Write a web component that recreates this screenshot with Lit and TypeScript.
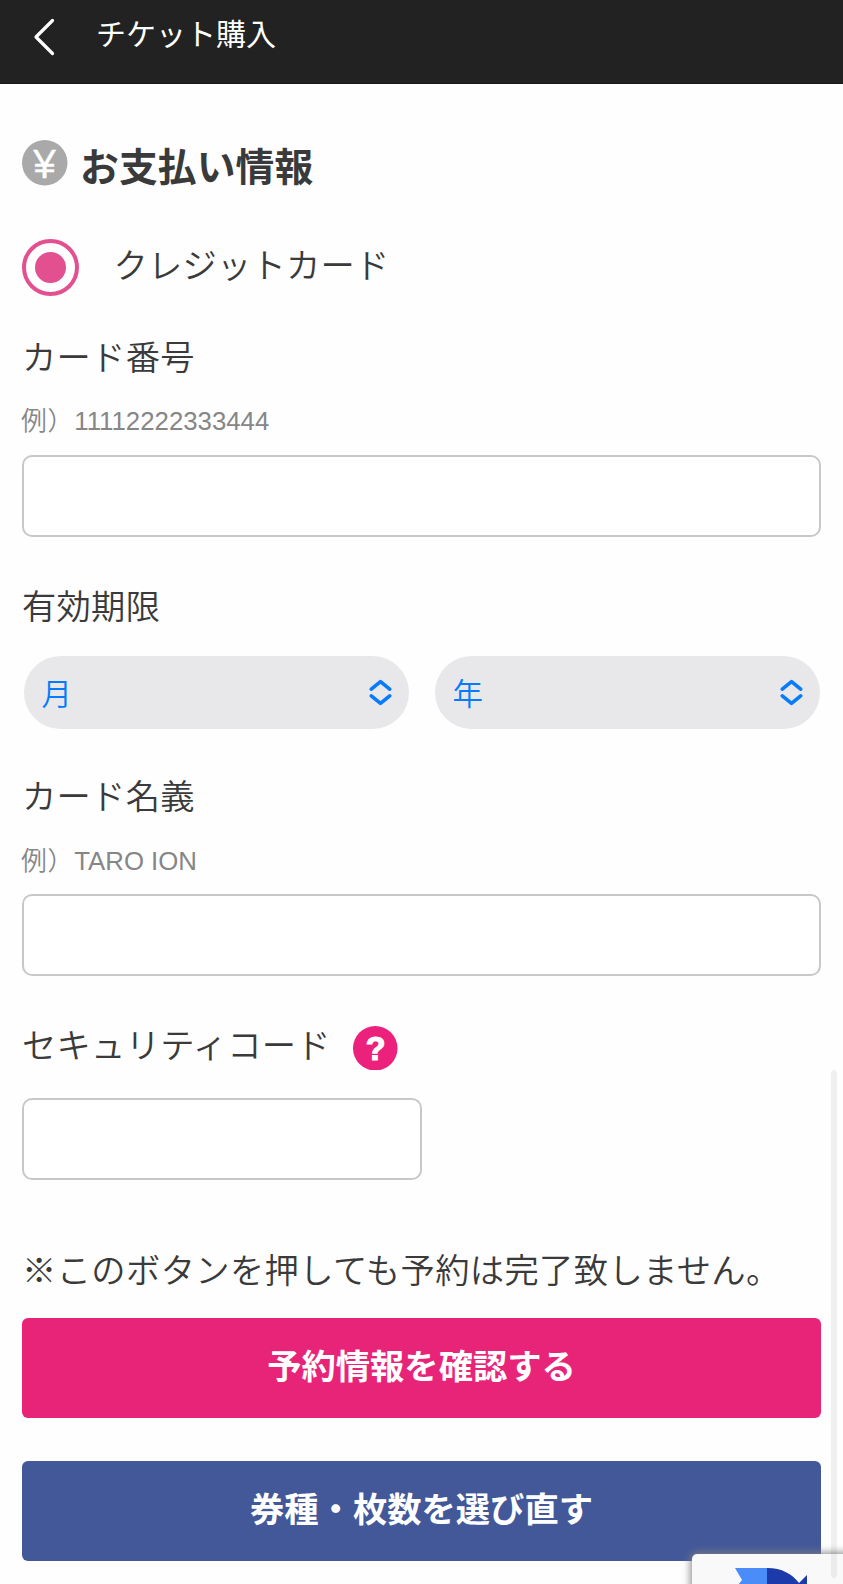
import { LitElement, html, css } from "lit";
import { customElement, property } from "lit/decorators.js";

@customElement("select-pill")
class SelectPill extends LitElement {
  @property() label = "";

  static styles = css`
    :host {
      display: flex;
      flex: 1;
      align-items: center;
      justify-content: space-between;
      height: 73.5px;
      padding: 0 17px 0 18px;
      box-sizing: border-box;
      border-radius: 37px;
      background: #e8e8ea;
      color: #067bfb;
      font-size: 30.5px;
      line-height: 72px;
    }
    svg {
      display: block;
      width: 23px;
      height: 27px;
    }
  `;

  render() {
    return html`<span>${this.label}</span>
      <svg viewBox="0 0 23 27" fill="none" stroke="#067bfb" stroke-width="3.6" stroke-linecap="round" stroke-linejoin="round">
        <path d="M2.3 10.2 11.5 2.6 20.7 10.2M2.3 16.8 11.5 24.4 20.7 16.8" />
      </svg>`;
  }
}

@customElement("app-root")
class AppRoot extends LitElement {
  static styles = css`
    :host {
      display: block;
      position: relative;
      height: 1584px;
      overflow: hidden;
      background: #fefefe;
      color: #3a3a3a;
      font-family: "Noto Sans CJK JP", sans-serif;
      font-size: 34.3px;
      font-weight: 350;
    }
    header {
      display: flex;
      height: 83.5px;
      box-sizing: border-box;
      padding: 9.5px 0 0 33px;
      background: #222;
      border-bottom: 1px solid #1a1a1a;
      color: #fff;
      font-size: 30px;
      font-weight: 400;
      line-height: 45px;
      gap: 41px;
    }
    .back {
      display: block;
      width: 22px;
      height: 38px;
      margin-top: 8.5px;
    }
    main {
      display: flex;
      flex-direction: column;
      padding: 0 22px;
    }
    h1 {
      display: flex;
      align-items: center;
      gap: 12.5px;
      height: 46px;
      margin: 56.5px 0 0;
      font-size: 38.8px;
      font-weight: 700;
      line-height: 46px;
      letter-spacing: 0.1px;
    }
    h1 svg {
      width: 45.5px;
      height: 45.5px;
    }
    h1 span {
      padding-top: 2px;
    }
    .method {
      display: flex;
      align-items: center;
      height: 57px;
      margin-top: 53px;
      gap: 35px;
      letter-spacing: 0.2px;
    }
    .method span {
      padding-bottom: 9px;
    }
    .radio {
      display: flex;
      align-items: center;
      justify-content: center;
      box-sizing: border-box;
      width: 57px;
      height: 57px;
      margin-left: -0.5px;
      border: 4px solid #e3508f;
      border-radius: 50%;
    }
    .dot {
      width: 31px;
      height: 31px;
      border-radius: 50%;
      background: #e3508f;
    }
    .label {
      height: 50px;
      line-height: 50px;
      letter-spacing: 0.25px;
    }
    .number {
      margin-top: 34px;
    }
    .hint {
      height: 40px;
      margin: 21px 0 0 -1px;
      overflow: hidden;
      color: #868686;
      font-family: "Liberation Sans", "Noto Sans CJK JP", sans-serif;
      font-size: 25.8px;
      line-height: 40px;
      white-space: nowrap;
    }
    .hint span {
      letter-spacing: 0.8px;
    }
    .field {
      display: block;
      box-sizing: border-box;
      width: 100%;
      height: 82px;
      margin: 13.5px 0 0;
      padding: 0 16px;
      border: 2px solid #c8c8c8;
      border-radius: 10px;
      background: #fff;
      outline: none;
    }
    .expiry {
      margin-top: 42px;
    }
    .selects {
      display: flex;
      gap: 26px;
      margin-top: 27px;
      padding: 0 1.5px;
    }
    .holder {
      margin-top: 39.5px;
    }
    .holder + .hint {
      margin-top: 22px;
    }
    .security {
      display: flex;
      margin-top: 42px;
      gap: 22.5px;
    }
    .help {
      width: 44.5px;
      height: 44.5px;
      margin-top: 7.5px;
    }
    .code {
      width: 399.5px;
      margin-top: 30px;
    }
    .note {
      height: 50px;
      margin-top: 63px;
      line-height: 50px;
      letter-spacing: 0.36px;
      white-space: nowrap;
    }
    button {
      display: block;
      width: 100%;
      height: 99.5px;
      margin: 43.5px 0 0;
      padding: 0 0 8px;
      border: 0;
      border-radius: 6px;
      background: #435899;
      color: #fff;
      font: 700 34.3px/90px "Noto Sans CJK JP", sans-serif;
    }
    .confirm {
      margin-top: 25px;
      background: #e82479;
    }
    .scrollbar {
      position: absolute;
      right: 6px;
      top: 1070px;
      width: 6px;
      height: 508px;
      border-radius: 3px;
      background: rgba(0, 0, 0, 0.055);
    }
    .captcha {
      position: absolute;
      left: 692px;
      top: 1553.5px;
      width: 160px;
      height: 60px;
      border-radius: 5px;
      background: #f9f9f9;
      box-shadow: 0 0 9px 1px #808080;
    }
    .captcha svg {
      display: block;
      margin: 14px 0 0 42px;
      width: 76px;
      height: 40px;
    }
    .yen,
    .question {
      font-family: "Liberation Sans", sans-serif;
      text-anchor: middle;
      fill: #fff;
      letter-spacing: 0;
    }
    .yen {
      font-size: 41px;
      font-weight: 400;
      stroke: #fff;
      stroke-width: 0.3px;
    }
    .question {
      font-size: 32px;
      font-weight: 700;
      stroke: #fff;
      stroke-width: 1.2px;
    }
  `;

  render() {
    return html`
      <header>
        <svg class="back" viewBox="0 0 22 38" fill="none" stroke="#fff" stroke-width="3.2" stroke-linecap="round" stroke-linejoin="round">
          <path d="M19.5 2.5 3 19 19.5 35.5" />
        </svg>
        <span>チケット購入</span>
      </header>
      <main>
        <h1>
          <svg viewBox="0 0 46 46">
            <circle cx="23" cy="23" r="23" fill="#a9a9a9" />
            <text class="yen" x="22.8" y="38">¥</text>
          </svg>
          <span>お支払い情報</span>
        </h1>
        <div class="method">
          <div class="radio"><div class="dot"></div></div>
          <span>クレジットカード</span>
        </div>
        <div class="label number">カード番号</div>
        <div class="hint"><span>例）</span>11112222333444</div>
        <input class="field" aria-label="カード番号" />
        <div class="label expiry">有効期限</div>
        <div class="selects">
          <select-pill label="月"></select-pill>
          <select-pill label="年"></select-pill>
        </div>
        <div class="label holder">カード名義</div>
        <div class="hint"><span>例）</span>TARO ION</div>
        <input class="field" aria-label="カード名義" />
        <div class="label security">
          <span>セキュリティコード</span>
          <svg class="help" viewBox="0 0 44 44">
            <circle cx="22" cy="22" r="22" fill="#eb217c" />
            <text class="question" x="22.3" y="33.5">?</text>
          </svg>
        </div>
        <input class="field code" aria-label="セキュリティコード" />
        <div class="note">※このボタンを押しても予約は完了致しません。</div>
        <button class="confirm">予約情報を確認する</button>
        <button>券種・枚数を選び直す</button>
      </main>
      <div class="captcha">
        <svg viewBox="0 0 76 40">
          <path d="M1 0H33V19Q22 20 17 31L0 22 8 12Z" fill="#4b8df8" />
          <path d="M33 0C48 0 58 6 65 15L73 7V40H46L55 27Q47 19 33 19Z" fill="#1c3aa9" />
        </svg>
      </div>
      <div class="scrollbar"></div>
    `;
  }
}
